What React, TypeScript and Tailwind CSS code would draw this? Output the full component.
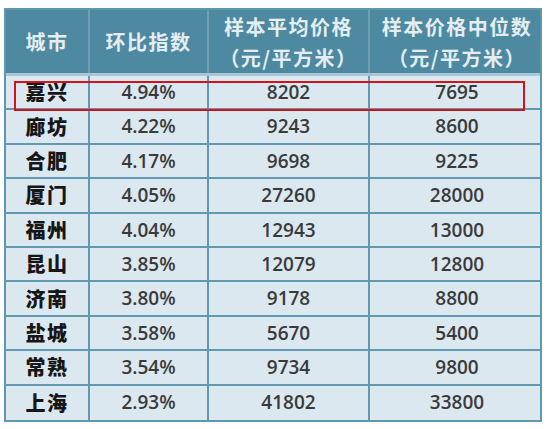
const rows = [
  { city: "嘉兴", ratio: "4.94%", avg: "8202", median: "7695" },
  { city: "廊坊", ratio: "4.22%", avg: "9243", median: "8600" },
  { city: "合肥", ratio: "4.17%", avg: "9698", median: "9225" },
  { city: "厦门", ratio: "4.05%", avg: "27260", median: "28000" },
  { city: "福州", ratio: "4.04%", avg: "12943", median: "13000" },
  { city: "昆山", ratio: "3.85%", avg: "12079", median: "12800" },
  { city: "济南", ratio: "3.80%", avg: "9178", median: "8800" },
  { city: "盐城", ratio: "3.58%", avg: "5670", median: "5400" },
  { city: "常熟", ratio: "3.54%", avg: "9734", median: "9800" },
  { city: "上海", ratio: "2.93%", avg: "41802", median: "33800" },
];

const cjk = "font-['Noto_Sans_CJK_SC',sans-serif]";
const num = "font-['Open_Sans','Liberation_Sans',sans-serif]";
const cols = "grid grid-cols-[84px_119px_161px_174px]";

export default function App() {
  return (
    <div className="h-[429px] w-[550px] bg-white pl-1 pt-2">
      <div className="relative w-[538px] border-2 border-[#5e97ae] bg-[#dce8f0]">
        <div
          className={`${cols} h-[66px] border-b-[3px] border-[#a8c8d7] bg-[#4d89a0] text-[20px] font-bold leading-[31px] tracking-[1.5px] text-[#e4edf1] ${cjk}`}
        >
          <div className="flex items-center justify-center border-r-2 border-[#6f9fb4]">城市</div>
          <div className="flex items-center justify-center border-r-2 border-[#6f9fb4]">环比指数</div>
          <div className="flex flex-col items-center justify-center border-r-2 border-[#6f9fb4]">
            <span>样本平均价格</span>
            <span>（元/平方米）</span>
          </div>
          <div className="flex flex-col items-center justify-center">
            <span>样本价格中位数</span>
            <span>（元/平方米）</span>
          </div>
        </div>

        {rows.map((r, i) => (
          <div
            key={r.city}
            className={`${cols} h-[34.4px] ${i < rows.length - 1 ? "border-b-2 border-[#6298b0]" : ""}`}
          >
            <div
              className={`flex items-center justify-center border-r-2 border-[#6298b0] text-[20px] font-black tracking-[1.5px] text-[#161616] ${cjk}`}
            >
              {r.city}
            </div>
            <div
              className={`flex items-center justify-center border-r-2 border-[#6298b0] text-[19px] font-semibold text-[#3a3a3a] ${num}`}
            >
              {r.ratio}
            </div>
            <div
              className={`flex items-center justify-center border-r-2 border-[#6298b0] text-[19px] font-semibold text-[#3a3a3a] ${num}`}
            >
              {r.avg}
            </div>
            <div className={`flex items-center justify-center text-[19px] font-semibold text-[#3a3a3a] ${num}`}>
              {r.median}
            </div>
          </div>
        ))}

        <div className="pointer-events-none absolute left-[8px] top-[71px] h-[30px] w-[511px] border-[2.5px] border-[#d0141c]" />
      </div>
    </div>
  );
}
